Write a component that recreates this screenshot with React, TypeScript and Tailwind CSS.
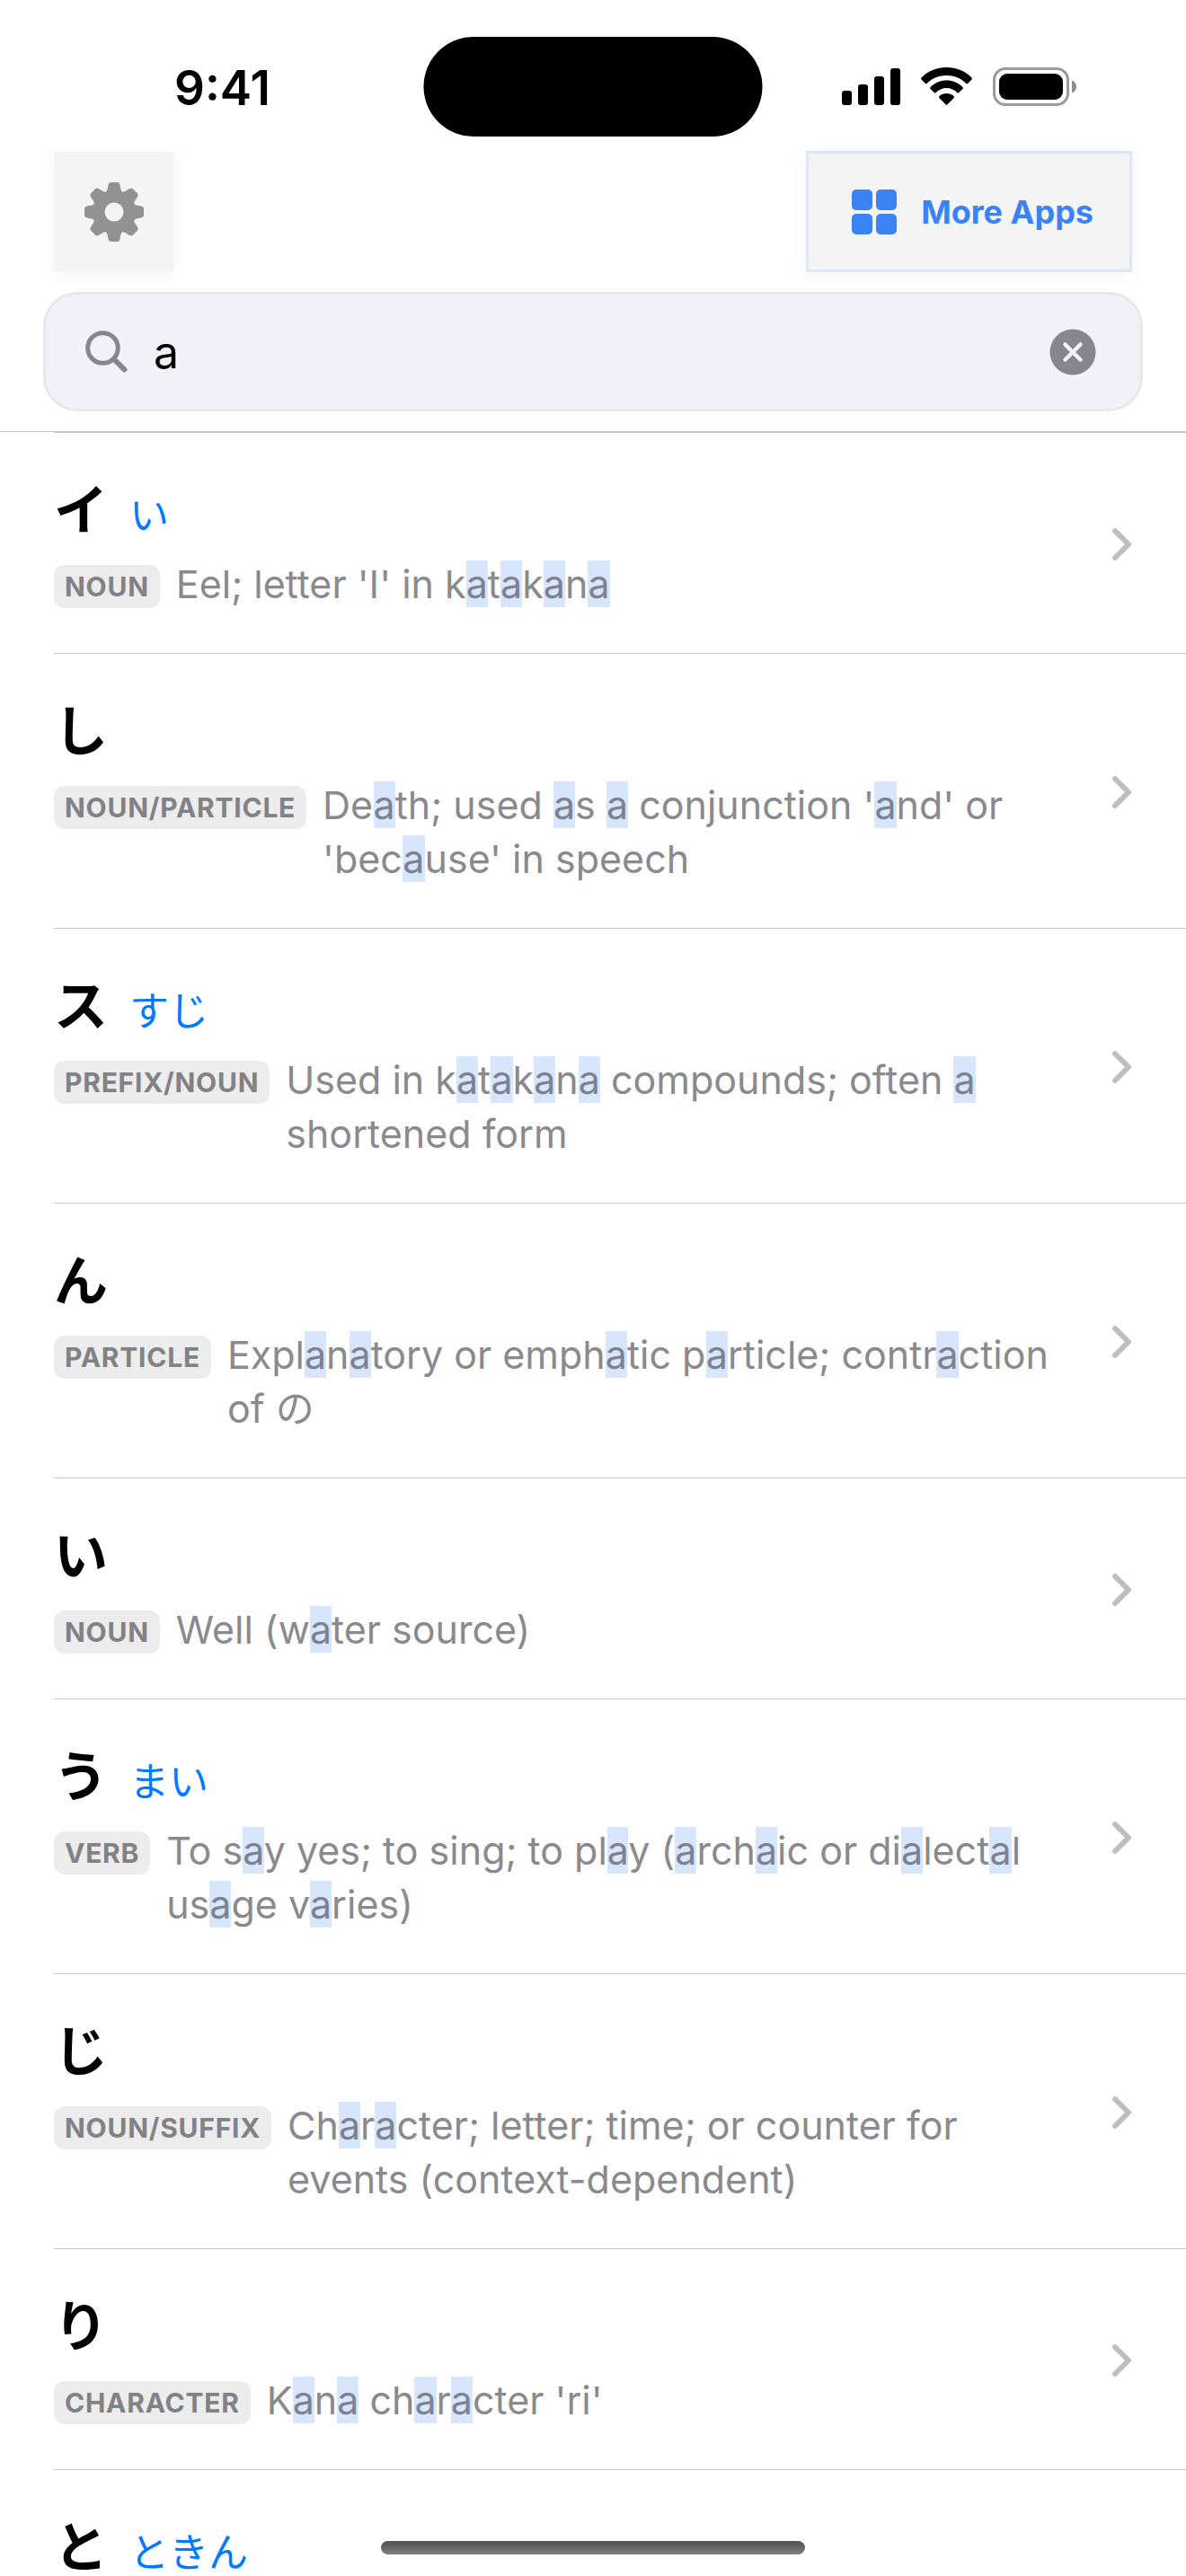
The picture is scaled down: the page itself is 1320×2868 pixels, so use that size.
const query = "a";

type Entry = {
	word: string;
	reading?: string;
	type?: string;
	meaning?: string;
};

const entries: Entry[] = [
	{ word: "イ", reading: "い", type: "NOUN", meaning: "Eel; letter 'I' in katakana" },
	{
		word: "し",
		type: "NOUN/PARTICLE",
		meaning: "Death; used as a conjunction 'and' or 'because' in speech",
	},
	{
		word: "ス",
		reading: "すじ",
		type: "PREFIX/NOUN",
		meaning: "Used in katakana compounds; often a shortened form",
	},
	{
		word: "ん",
		type: "PARTICLE",
		meaning: "Explanatory or emphatic particle; contraction of の",
	},
	{ word: "い", type: "NOUN", meaning: "Well (water source)" },
	{
		word: "う",
		reading: "まい",
		type: "VERB",
		meaning: "To say yes; to sing; to play (archaic or dialectal usage varies)",
	},
	{
		word: "じ",
		type: "NOUN/SUFFIX",
		meaning: "Character; letter; time; or counter for events (context-dependent)",
	},
	{ word: "り", type: "CHARACTER", meaning: "Kana character 'ri'" },
	{ word: "と", reading: "ときん" },
];

const GearIcon = () => (
	<svg width="66" height="66" viewBox="-33 -33 66 66" fill="currentColor" aria-hidden="true">
		<circle r="17.25" fill="none" stroke="currentColor" strokeWidth="13.5" />
		{[0, 45, 90, 135, 180, 225, 270, 315].map((angle) => (
			<path
				key={angle}
				transform={`rotate(${angle})`}
				d="M-10 -21Q-8 -23 -7.500 -25L-6.500 -30Q-5.800 -33 -3.500 -33H3.500Q5.800 -33 6.500 -30L7.500 -25Q8 -23 10 -21Z"
			/>
		))}
	</svg>
);

const StatusBar = () => (
	<div className="relative flex h-[168px] items-start justify-between pt-[72px] pl-[194px] pr-[122px]">
		<span className="text-[53px] font-semibold leading-[52px]">9:41</span>
		<div className="absolute top-[41px] left-1/2 h-[111px] w-[377px] -translate-x-1/2 rounded-full bg-black" />
		<div className="flex h-[49px] items-center gap-[23px]">
			<svg width="65" height="43" viewBox="0 0 65 43" aria-hidden="true">
				<rect x="0" y="26" width="11" height="16" rx="3" />
				<rect x="18" y="19" width="11" height="23" rx="3" />
				<rect x="36" y="10" width="11" height="32" rx="3" />
				<rect x="54" y="1" width="11" height="41" rx="3" />
			</svg>
			<svg width="57" height="43" viewBox="0 0 57 43" aria-hidden="true">
				<path d="M28.500 0C39.500 0 49 4 56.500 11.500Q57.300 12.500 56.500 13.500L52 18Q51.300 18.600 50.500 18C44.500 12 37 9 28.500 9S12.500 12 6.500 18Q5.700 18.600 5 18L.5 13.500Q-.3 12.500 .5 11.500C8 4 17.500 0 28.500 0Z" />
				<path d="M28.500 14.500C35.500 14.500 41.500 17 46.500 22Q47.300 23 46.500 24L42 28.200Q41.300 28.800 40.500 28.200C37.500 25 33 23 28.500 23S19.500 25 16.500 28.200Q15.700 28.800 15 28.200L10.500 24Q9.700 23 10.500 22C15.500 17 21.500 14.500 28.500 14.500Z" />
				<path d="M28.500 29C31.800 29 34.500 30.200 36.700 32.200Q37.500 33 36.700 34L29.300 41.500Q28.500 42.300 27.700 41.500L20.300 34Q19.500 33 20.300 32.200C22.500 30.200 25.200 29 28.500 29Z" />
			</svg>
			<svg width="93" height="43" viewBox="0 0 93 43" aria-hidden="true">
				<rect x="1.5" y="1.5" width="82" height="40" rx="12.5" fill="none" stroke="#9a9a9a" strokeWidth="3" />
				<rect x="7" y="7" width="71" height="29" rx="9" />
				<path d="M88 14.500Q93 16.500 93 21.500T88 28.500Z" fill="#8e8e8e" />
			</svg>
		</div>
	</div>
);

const Toolbar = () => (
	<div className="flex items-center justify-between px-[60px]">
		<button
			aria-label="Settings"
			className="flex size-[133px] items-center justify-center bg-[#f4f4f4] text-[#929292] shadow-[0_3px_18px_rgba(0,0,0,0.05)]"
		>
			<GearIcon />
		</button>
		<button className="flex h-[135px] items-center gap-[27px] border-3 border-[#dbe6f8] bg-[#f4f4f4] pr-10 pl-12 text-[#3b82f6] shadow-[0_3px_18px_rgba(0,0,0,0.05)]">
			<svg width="50" height="50" viewBox="0 0 50 50" fill="currentColor" aria-hidden="true">
				<rect width="23" height="23" rx="5" />
				<rect x="27" width="23" height="23" rx="5" />
				<rect y="27" width="23" height="23" rx="5" />
				<rect x="27" y="27" width="23" height="23" rx="5" />
			</svg>
			<span className="text-[36px] font-bold">More Apps</span>
		</button>
	</div>
);

const SearchField = () => (
	<div className="px-12 pt-[22px] pb-[22px]">
		<div className="flex h-[133px] items-center rounded-[38px] border-3 border-[#e8e8ec] bg-[#f2f1f7] pr-[49px] pl-11">
			<svg width="48" height="48" viewBox="0 0 48 48" fill="none" stroke="#87868c" strokeLinecap="round" aria-hidden="true">
				<circle cx="19.500" cy="19.500" r="16.800" strokeWidth="5" />
				<path d="M32 32L43.500 43.500" strokeWidth="6" />
			</svg>
			<input
				aria-label="Search"
				defaultValue={query}
				className="ml-7 min-w-0 flex-1 bg-transparent text-[50px] leading-[64px] text-black outline-none"
			/>
			<button aria-label="Clear search">
				<svg width="52" height="52" viewBox="0 0 52 52" aria-hidden="true">
					<circle cx="26" cy="26" r="25.500" fill="#87868c" />
					<path d="M17.500 17.500L34.500 34.500M34.500 17.500L17.500 34.500" stroke="#f2f1f7" strokeWidth="4.500" strokeLinecap="round" />
				</svg>
			</button>
		</div>
	</div>
);

const Highlighted = ({ text }: { text: string }) => (
	<>
		{text.split(new RegExp(`(${query})`)).map((part, i) =>
			part === query ? (
				<mark key={i} className="bg-[#d8e6fd] text-[#7c8291]">
					{part}
				</mark>
			) : (
				part
			),
		)}
	</>
);

const EntryRow = ({ entry }: { entry: Entry }) => (
	<li className="ml-[60px] border-b border-[#c6c6c8] pr-[58px] first:border-t">
		<a href="#" className="flex items-center gap-11 pt-[50px] pb-[47px]">
			<div className="min-w-0 flex-1">
				<h2 className="flex h-[72px] items-baseline gap-6 leading-[72px]">
					<span className="text-[60px] font-bold">{entry.word}</span>
					{entry.reading && (
						<span className="text-[44px] text-[#007aff]">{entry.reading}</span>
					)}
				</h2>
				{entry.meaning ? (
					<div className="mt-4 flex items-start gap-[18px]">
						<span className="mt-[9px] flex h-12 shrink-0 items-center rounded-xl bg-[#ececec] px-3 text-[30px] font-bold tracking-wide text-[#828186]">
							{entry.type}
						</span>
						<p className="text-[43px] leading-[60px] text-[#8a8a8e]">
							<Highlighted text={entry.meaning} />
						</p>
					</div>
				) : (
					<div className="mt-4 h-[120px]" />
				)}
			</div>
			<svg width="26" height="40" viewBox="0 0 26 40" fill="none" stroke="#bfbfbf" strokeWidth="6" strokeLinecap="round" strokeLinejoin="round" aria-hidden="true">
				<path d="M5 5L20 20L5 35" />
			</svg>
		</a>
	</li>
);

export default function App() {
	return (
		<div className="relative h-screen overflow-hidden bg-white font-['Inter','Noto_Sans_CJK_JP',sans-serif] text-black">
			<StatusBar />
			<header className="border-b border-[#c6c6c8]">
				<Toolbar />
				<SearchField />
			</header>
			<main>
				<ul>
					{entries.map((entry) => (
						<EntryRow key={entry.word} entry={entry} />
					))}
				</ul>
			</main>
			<div className="absolute bottom-6 left-1/2 h-[15px] w-[472px] -translate-x-1/2 rounded-full bg-linear-to-b from-[#505050] to-[#808080]" />
		</div>
	);
}
